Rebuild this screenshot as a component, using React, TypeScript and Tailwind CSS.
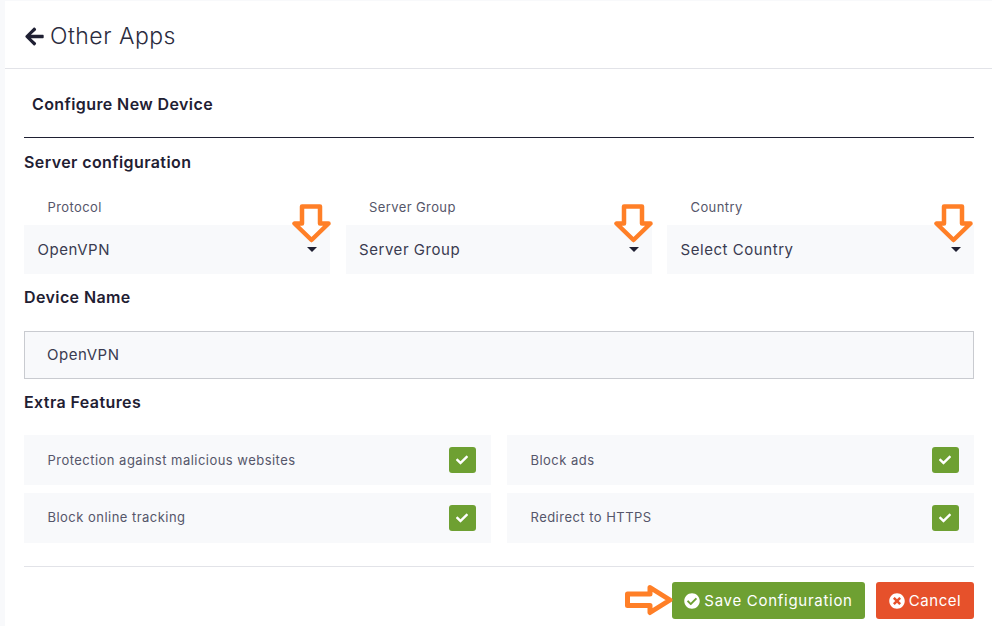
import { FaArrowLeft, FaCheck, FaCheckCircle, FaTimesCircle } from "react-icons/fa";

const selects = [
  { label: "Protocol", value: "OpenVPN", arrow: "right-[-2px]" },
  { label: "Server Group", value: "Server Group", arrow: "right-[-2px]" },
  { label: "Country", value: "Select Country", arrow: "right-0" },
];

const features = [
  { name: "Protection against malicious websites", text: "pt-[2px]" },
  { name: "Block ads", text: "pt-[2px]" },
  { name: "Block online tracking", text: "" },
  { name: "Redirect to HTTPS", text: "" },
];

const DownArrow = ({ className }: { className: string }) => (
  <svg className={className} width="40" height="40" viewBox="0 0 40 40">
    <path
      d="M10 2.5H28V19.5H36.5L19.5 36L2.5 19.5H10Z"
      fill="#ffffff"
      stroke="#ff7f27"
      strokeWidth="4.5"
      strokeLinejoin="round"
    />
  </svg>
);

const App = () => {
  return (
    <div className="relative h-[626px] w-[992px] overflow-hidden bg-[#f8f9fb] pl-[5px] pt-px font-['Inter',sans-serif] text-[#1f2033]">
      <div className="h-[625px] bg-white">
        <div className="flex h-[68px] items-center gap-[5px] border-b border-[#e2e3e8] pl-[19px] pt-1">
          <FaArrowLeft className="text-[21px] text-[#1f2033]" />
          <h1 className="text-[23px] font-light tracking-[0.5px] text-[#2b2c3e]">Other Apps</h1>
        </div>

        <div className="pl-[19px] pr-[18px]">
          <div className="flex h-[69px] items-center border-b border-[#1f2033] pl-2 pt-[2px]">
            <h2 className="text-[16px] font-semibold tracking-[0.4px]">Configure New Device</h2>
          </div>

          <h3 className="mt-[13px] text-[16px] leading-[22px] font-semibold tracking-[0.4px]">Server configuration</h3>

          <div className="mt-[25px] grid grid-cols-[306px_306px_307px] gap-x-[15.5px]">
            {selects.map((item) => (
              <div key={item.label}>
                <div className="pl-[23.5px] text-[13px] leading-[18px] tracking-[0.4px] text-[#55566a]">{item.label}</div>
                <div className="relative mt-[9px] flex h-[49px] items-center bg-[#f8f9fb] pl-[13.5px] pt-[2px] text-[15px] tracking-[0.55px] text-[#3a3b50]">
                  {item.value}
                  <span className="absolute right-[13px] top-[22px] h-0 w-0 border-x-[5px] border-t-[5px] border-x-transparent border-t-[#1f2033]" />
                  <DownArrow className={`absolute top-[-21px] ${item.arrow}`} />
                </div>
              </div>
            ))}
          </div>

          <h3 className="mt-[12px] text-[16px] leading-[22px] font-semibold tracking-[0.4px]">Device Name</h3>

          <div className="mt-[23px] flex h-[48px] items-center border border-[#c9cbd0] bg-[#f8f9fb] pl-[22px] text-[15px] tracking-[0.55px] text-[#3a3b50]">
            OpenVPN
          </div>

          <h3 className="mt-[12px] text-[16px] leading-[22px] font-semibold tracking-[0.4px]">Extra Features</h3>

          <div className="mt-[22px] grid grid-cols-2 gap-x-[16px] gap-y-[8px]">
            {features.map((item) => (
              <div key={item.name} className="flex h-[50px] items-center justify-between bg-[#f8f9fb] pl-[23.5px] pr-[15.5px] text-[13px] tracking-[0.47px] text-[#55566a]">
                <span className={item.text}>{item.name}</span>
                <span className="flex h-[26px] w-[26.5px] items-center justify-center rounded-[3px] bg-[#6ea032] text-[12px] text-white">
                  <FaCheck />
                </span>
              </div>
            ))}
          </div>

          <div className="mt-[23px] flex justify-end gap-[11px] border-t border-[#e2e3e8] pt-[15px]">
            <button className="flex h-[37px] w-[193px] items-center justify-center gap-[4px] rounded-[3px] bg-[#6ea032] pt-px text-[15px] tracking-[0.72px] text-white">
              <FaCheckCircle className="text-[16px]" />
              Save Configuration
            </button>
            <button className="flex h-[37px] w-[98px] items-center justify-center gap-[4px] rounded-[3px] bg-[#e6512b] pt-px text-[15px] tracking-[0.55px] text-white">
              <FaTimesCircle className="text-[16px]" />
              Cancel
            </button>
          </div>
        </div>
      </div>

      <svg className="absolute left-[624px] top-[584px]" width="50" height="32" viewBox="0 0 50 32">
        <path
          d="M3.5 10H26V3.5L46 16L26 28.5V21.5H3.5Z"
          fill="#ffffff"
          stroke="#ff7f27"
          strokeWidth="5"
          strokeLinejoin="round"
        />
      </svg>
    </div>
  );
};

export default App;
